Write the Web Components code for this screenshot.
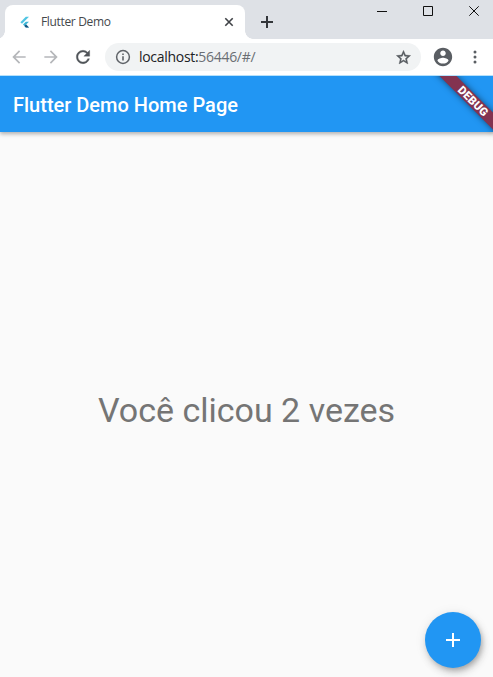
<!DOCTYPE html>
<html lang="pt">
<head>
<meta charset="utf-8">
<title>Flutter Demo</title>
<style>
html, body { margin: 0; height: 100%; overflow: hidden; }
body { font-family: Roboto, "Liberation Sans", sans-serif; }
</style>
</head>
<body>
<browser-window></browser-window>
<script>
const define = (name, html) => {
  const template = document.createElement('template');
  template.innerHTML = html;
  customElements.define(name, class extends HTMLElement {
    constructor() {
      super();
      this.attachShadow({ mode: 'open' }).append(template.content.cloneNode(true));
    }
  });
};

define('browser-tab', `
<style>
:host { display: flex; align-items: center; position: relative; box-sizing: border-box; width: 240px; height: 34px; padding: 0 10px 0 13px; background: #fff; border-radius: 8px 8px 0 0; font: 12px/16px "Open Sans", "Noto Sans", sans-serif; color: #45484c; }
:host::before, :host::after { content: ""; position: absolute; bottom: 0; width: 8px; height: 8px; }
:host::before { left: -8px; background: radial-gradient(circle at 0 0, transparent 7.5px, #fff 8px); }
:host::after { right: -8px; background: radial-gradient(circle at 100% 0, transparent 7.5px, #fff 8px); }
svg { display: block; flex: none; }
.title { flex: 1; margin-left: 9px; white-space: nowrap; letter-spacing: -.34px; }
</style>
<svg width="14" height="14" viewBox="0 0 14 14"><path d="M7.8 1.8H11L4 8.8 2.4 7.2z" fill="#50c5e3"/><path d="M7.8 6.7H11L8.1 9.6 11 12.4H7.8L5 9.6z" fill="#3eb5d5"/><path d="M6.5 11.1l1.6-1.5L11 12.4H7.8z" fill="#17507e"/></svg>
<span class="title"><slot></slot></span>
<svg width="12" height="12" viewBox="0 0 12 12" fill="none" stroke="#3f4246" stroke-width="1.6"><path d="M2.3 2.3l7.4 7.4M9.7 2.3L2.3 9.700"/></svg>
`);

define('window-controls', `
<style>
:host { display: flex; align-self: flex-start; margin-left: auto; height: 22px; align-items: center; }
svg { display: block; }
</style>
<svg width="117" height="22" viewBox="0 0 117 22" fill="none" stroke="#111"><path d="M1 11.5h10M47.5 6.5h9v9h-9zM93.3 6.3l9.4 9.4M102.7 6.3l-9.4 9.4"/></svg>
`);

define('tab-strip', `
<style>
:host { display: flex; height: 39px; padding-left: 5px; align-items: flex-end; background: #dee1e6; box-sizing: border-box; }
.new { width: 14px; height: 14px; margin: 0 0 10px 15px; display: block; }
</style>
<browser-tab>Flutter Demo</browser-tab>
<svg class="new" viewBox="0 0 14 14" stroke="#33363a" stroke-width="2" fill="none"><path d="M7 1v12M1 7h12"/></svg>
<window-controls></window-controls>
`);

define('address-bar', `
<style>
:host { display: flex; align-items: center; box-sizing: border-box; width: 316px; height: 28px; padding: 0 9px 0 10px; border-radius: 14px; background: #f1f3f4; font: 14px/20px "Open Sans", "Noto Sans", sans-serif; color: #202124; }
.url { flex: 1; margin-left: 8px; letter-spacing: -.3px; white-space: nowrap; }
.rest { color: #6a6e73; }
svg { display: block; flex: none; }
</style>
<svg width="16" height="16" viewBox="0 0 16 16"><circle cx="8" cy="8" r="6.4" fill="none" stroke="#5f6368" stroke-width="1.5"/><path d="M7.200 7.200h1.600v4.200H7.200zM7.200 4.500h1.600v1.600H7.200z" fill="#5f6368"/></svg>
<span class="url"><slot name="host"></slot><span class="rest"><slot name="rest"></slot></span></span>
<svg width="17" height="17" viewBox="0 0 24 24"><path fill="#54585d" stroke="#54585d" stroke-width=".6" d="M22 9.24l-7.19-.62L12 2 9.19 8.63 2 9.24l5.46 4.73L5.82 21 12 17.27 18.18 21l-1.63-7.03L22 9.24zM12 15.4l-3.76 2.27 1-4.28-3.32-2.88 4.38-.38L12 6.1l1.71 4.04 4.38.38-3.32 2.88 1 4.28L12 15.4z"/></svg>
`);

define('browser-toolbar', `
<style>
:host { display: flex; align-items: center; height: 36px; background: #fff; padding-left: 9px; box-sizing: border-box; }
svg { display: block; flex: none; }
.fwd { margin-left: 12px; } .reload { margin-left: 12px; }
address-bar { margin-left: 12px; }
.user { margin-left: 11px; } .menu { margin-left: 11px; }
</style>
<svg width="20" height="20" viewBox="0 0 24 24"><path fill="#b5b7ba" d="M20 11H7.83l5.59-5.59L12 4l-8 8 8 8 1.41-1.41L7.83 13H20v-2z"/></svg>
<svg class="fwd" width="20" height="20" viewBox="0 0 24 24"><path fill="#b5b7ba" d="M12 4l-1.41 1.41L16.17 11H4v2h12.17l-5.58 5.59L12 20l8-8z"/></svg>
<svg class="reload" width="20" height="20" viewBox="0 0 24 24"><path fill="#505459" d="M17.65 6.35C16.2 4.9 14.21 4 12 4c-4.42 0-7.99 3.58-7.99 8s3.57 8 7.99 8c3.73 0 6.84-2.55 7.73-6h-2.08c-.82 2.33-3.04 4-5.65 4-3.31 0-6-2.69-6-6s2.69-6 6-6c1.66 0 3.14.69 4.22 1.78L13 11h7V4l-2.35 2.35z" stroke="#505459" stroke-width=".4"/></svg>
<address-bar><span slot="host">localhost:</span><span slot="rest">56446/#/</span></address-bar>
<svg class="user" width="22" height="22" viewBox="0 0 24 24"><path fill="#5a5e63" d="M12 2C6.48 2 2 6.48 2 12s4.48 10 10 10 10-4.48 10-10S17.52 2 12 2zm0 3c1.66 0 3 1.34 3 3s-1.34 3-3 3-3-1.34-3-3 1.34-3 3-3zm0 14.2c-2.5 0-4.71-1.28-6-3.22.03-1.99 4-3.08 6-3.08 1.99 0 5.97 1.09 6 3.08-1.29 1.94-3.5 3.22-6 3.22z"/></svg>
<svg class="menu" width="20" height="20" viewBox="0 0 20 20" fill="#5a5e63"><circle cx="10" cy="5" r="1.5"/><circle cx="10" cy="10" r="1.5"/><circle cx="10" cy="15" r="1.5"/></svg>
`);

define('app-bar', `
<style>
:host { display: flex; align-items: center; box-sizing: border-box; height: 57px; padding: 2px 13px 0; background: #2196f3; border-top: 1px solid #b5e1fc; color: #fff; font: 500 20px/24px Roboto, sans-serif; box-shadow: 0 2px 4px rgba(0,0,0,.3); z-index: 1; }
span { white-space: nowrap; }
</style><span><slot></slot></span>
`);

define('debug-banner', `
<style>
:host { position: absolute; right: 0; top: 1px; width: 70px; height: 70px; overflow: hidden; z-index: 2; }
span { position: absolute; box-sizing: border-box; left: -2px; top: 16.5px; width: 100px; height: 12px; padding-left: 6px; text-align: center; background: #833350; color: #fff; font: 900 11.4px/12px Roboto, sans-serif; letter-spacing: .2px; transform: rotate(45deg); box-shadow: 0 0 6px rgba(0,0,0,.5); }
</style><span><slot></slot></span>
`);

define('action-button', `
<style>
:host { position: absolute; right: 12px; bottom: 9px; display: grid; place-items: center; width: 56px; height: 56px; border-radius: 50%; background: #2196f3; box-shadow: 2px 3px 5px -1px rgba(0,0,0,.2), 2px 5px 9px rgba(0,0,0,.15), 0 1px 12px rgba(0,0,0,.08); }
svg { display: block; }
</style>
<svg width="24" height="24" viewBox="0 0 24 24"><path fill="#fff" d="M19 13h-6v6h-2v-6H5v-2h6V5h2v6h6v2z"/></svg>
`);

define('counter-page', `
<style>
:host { display: flex; flex-direction: column; flex: 1; position: relative; background: #fafafa; overflow: hidden; }
main { flex: 1; display: grid; place-items: center; padding-top: 11px; box-sizing: border-box; }
p { margin: 0; font: 400 34px/40px Roboto, sans-serif; color: #757575; white-space: nowrap; }
</style>
<app-bar>Flutter Demo Home Page</app-bar>
<debug-banner>DEBUG</debug-banner>
<main><p>Você clicou 2 vezes</p></main>
<action-button></action-button>
`);

define('browser-window', `
<style>:host { display: flex; flex-direction: column; width: 493px; height: 677px; overflow: hidden; }</style>
<tab-strip></tab-strip>
<browser-toolbar></browser-toolbar>
<counter-page></counter-page>
`);
</script>
</body>
</html>
